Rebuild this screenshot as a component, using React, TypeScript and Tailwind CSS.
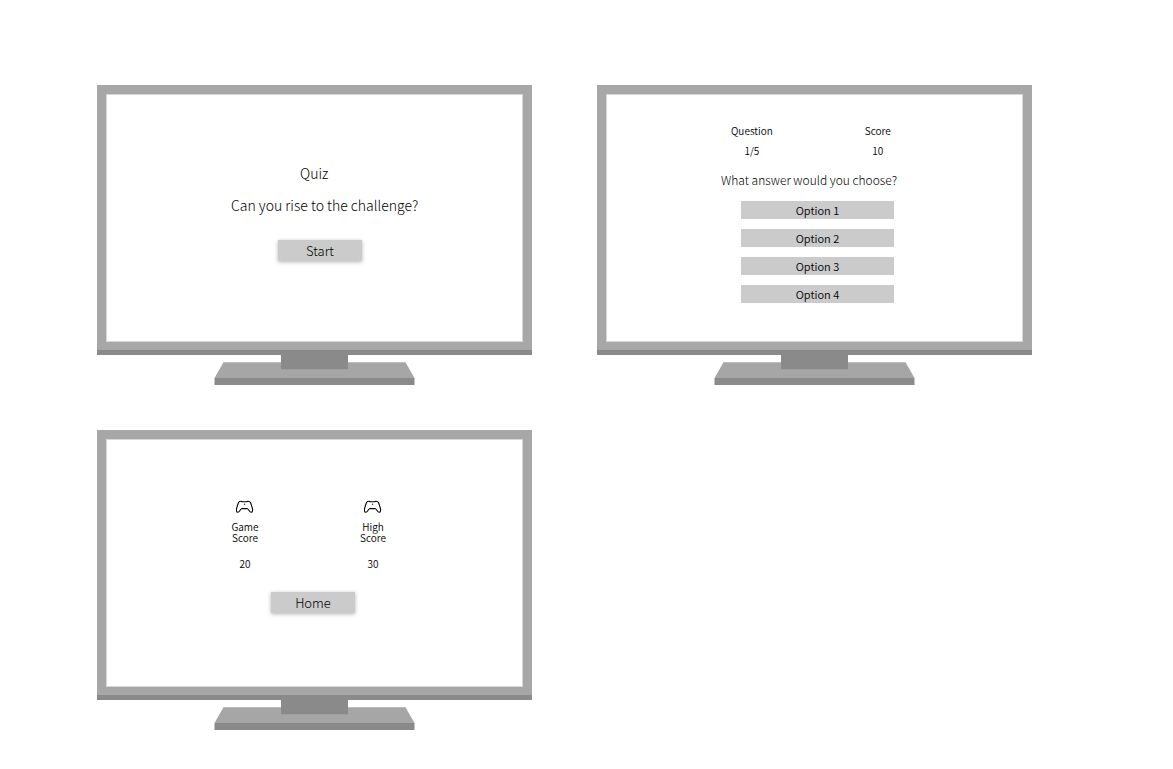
import type { ReactNode } from "react";

const options = ["Option 1", "Option 2", "Option 3", "Option 4"];

function Stand() {
  return (
    <svg viewBox="0 0 202 30" className="mx-auto block h-[30px] w-[202px]" aria-hidden="true">
      <path d="M9.5 7.3H191.5L200.5 23H.5Z" fill="#a6a6a6" />
      <path d="M.5 23H200.5V30H.5Z" fill="#8a8a8a" />
      <path d="M67 0H134V14.3H67Z" fill="#8a8a8a" />
    </svg>
  );
}

function Monitor({ label, children }: { label: string; children: ReactNode }) {
  return (
    <section aria-label={label}>
      <div className="border-b-[5px] border-[#8a8a8a]">
        <div className="min-h-[265px] border-[9px] border-b-[8px] border-[#a7a7a7] bg-white">
          <div className="min-h-[248px] border border-[#d6d6d6]">{children}</div>
        </div>
      </div>
      <Stand />
    </section>
  );
}

function ActionButton({ children }: { children: ReactNode }) {
  return (
    <button
      type="button"
      className="h-[21px] w-[84px] bg-[#cbcbcb] text-[13px] leading-[21px] font-light shadow-[0_1px_4px_rgba(0,0,0,0.3)]"
    >
      {children}
    </button>
  );
}

function Controller() {
  return (
    <svg
      viewBox="0 0 18 14"
      className="h-[14px] w-[18px]"
      fill="none"
      stroke="#000"
      strokeWidth="1.1"
      strokeLinejoin="round"
      aria-hidden="true"
    >
      <path d="M5 1.2C3.6 1.2 2.8 1.8 2.3 3L.8 7.6C.1 10 .3 12.2 1.8 12.3C3.5 12.4 4 9.6 5.6 8.6H11.4C13 9.6 13.5 12.4 15.2 12.3C16.7 12.2 16.9 10 16.2 7.6L14.7 3C14.2 1.8 13.4 1.2 12 1.2C11.2 1.2 11.2 1.8 10.6 1.8H6.4C5.8 1.8 5.8 1.2 5 1.2Z" />
      <circle cx="8.5" cy="4.2" r=".7" fill="#222" stroke="none" />
    </svg>
  );
}

function Result({ name, value }: { name: string; value: number }) {
  return (
    <div className="flex w-[28px] flex-col items-center text-center text-[10px] leading-[11px]">
      <Controller />
      <dt className="mt-[7px]">{name} Score</dt>
      <dd className="mt-[15px]">{value}</dd>
    </div>
  );
}

export default function App() {
  return (
    <main className="grid min-h-screen grid-cols-[repeat(auto-fit,minmax(0,435px))] content-start gap-x-[65px] gap-y-[45px] bg-white px-[97px] pt-[85px] pb-10 font-['Noto_Sans_CJK_SC','Noto_Sans',sans-serif] font-[350] text-black">
      <Monitor label="Start screen">
        <div className="flex flex-col items-start pt-[68px] pl-[124px] text-[14px] leading-5 font-light">
          <h1 className="ml-[69px] font-light">Quiz</h1>
          <p className="mt-3">Can you rise to the challenge?</p>
          <div className="mt-[25px] ml-[47px] flex">
            <ActionButton>Start</ActionButton>
          </div>
        </div>
      </Monitor>

      <Monitor label="Question screen">
        <div className="flex flex-col items-start pt-[29px] pl-[114px]">
          <dl className="ml-[10px] flex gap-[92px] text-center text-[10px] leading-[14px]">
            <div>
              <dt>Question</dt>
              <dd className="mt-[6px]">1/5</dd>
            </div>
            <div>
              <dt>Score</dt>
              <dd className="mt-[6px]">10</dd>
            </div>
          </dl>
          <h2 className="mt-[13px] text-[12px] leading-[18px] font-light">What answer would you choose?</h2>
          <div className="mt-3 ml-5 flex w-[153px] flex-col gap-[10px]">
            {options.map((option) => (
              <button key={option} type="button" className="h-[18px] bg-[#cbcbcb] text-[11px] leading-[18px]">
                {option}
              </button>
            ))}
          </div>
        </div>
      </Monitor>

      <Monitor label="Results screen">
        <div className="flex flex-col items-start pt-[60px] pl-[124px]">
          <dl className="flex gap-[100px]">
            <Result name="Game" value={20} />
            <Result name="High" value={30} />
          </dl>
          <div className="mt-[23px] ml-10 flex">
            <ActionButton>Home</ActionButton>
          </div>
        </div>
      </Monitor>
    </main>
  );
}
